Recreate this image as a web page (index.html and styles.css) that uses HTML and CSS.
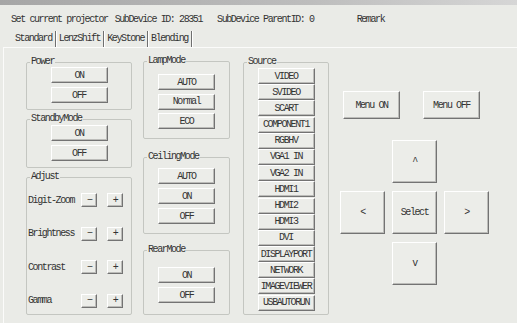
FILE: index.html
```html
<!DOCTYPE html>
<html lang="en">
<head>
  <meta charset="UTF-8">
  <title>Projector Control</title>
  <link rel="stylesheet" href="styles.css">
</head>
<body>

  <div class="topbar"></div>

  <!-- Device info -->
  <div class="info">
    <span class="info-title">Set current projector</span>
    <span class="info-id">SubDevice ID: 28351</span>
    <span class="info-parent">SubDevice ParentID: 0</span>
    <span>Remark</span>
  </div>

  <!-- Tabs -->
  <div class="tabs">
    <span class="tab active">Standard</span>
    <span class="tab">LenzShift</span>
    <span class="tab">KeyStone</span>
    <span class="tab">Blending</span>
  </div>

  <div class="panel">

    <!-- Left column -->
    <div class="col col-left">
      <fieldset class="group group-power">
        <legend>Power</legend>
        <div class="stack">
          <button class="btn">ON</button>
          <button class="btn">OFF</button>
        </div>
      </fieldset>
      <fieldset class="group group-standby">
        <legend>StandbyMode</legend>
        <div class="stack">
          <button class="btn">ON</button>
          <button class="btn">OFF</button>
        </div>
      </fieldset>
      <fieldset class="group group-adjust">
        <legend>Adjust</legend>
        <div class="adjust">
          <div class="adj-row"><span class="adj-label">Digit-Zoom</span><button class="small">&minus;</button><button class="small plus">+</button></div>
          <div class="adj-row"><span class="adj-label">Brightness</span><button class="small">&minus;</button><button class="small plus">+</button></div>
          <div class="adj-row"><span class="adj-label">Contrast</span><button class="small">&minus;</button><button class="small plus">+</button></div>
          <div class="adj-row"><span class="adj-label">Gamma</span><button class="small">&minus;</button><button class="small plus">+</button></div>
        </div>
      </fieldset>
    </div>

    <!-- Middle column -->
    <div class="col col-mid">
      <fieldset class="group group-lamp">
        <legend>LampMode</legend>
        <div class="stack stack-lamp">
          <button class="btn">AUTO</button>
          <button class="btn">Normal</button>
          <button class="btn">ECO</button>
        </div>
      </fieldset>
      <fieldset class="group group-ceiling">
        <legend>CeilingMode</legend>
        <div class="stack">
          <button class="btn">AUTO</button>
          <button class="btn">ON</button>
          <button class="btn">OFF</button>
        </div>
      </fieldset>
      <fieldset class="group group-rear">
        <legend>RearMode</legend>
        <div class="stack">
          <button class="btn">ON</button>
          <button class="btn">OFF</button>
        </div>
      </fieldset>
    </div>

    <!-- Source column -->
    <div class="col col-source">
      <fieldset class="group group-source">
        <legend>Source</legend>
        <div class="stack stack-source">
          <button class="btn">VIDEO</button>
          <button class="btn">SVIDEO</button>
          <button class="btn">SCART</button>
          <button class="btn">COMPONENT1</button>
          <button class="btn">RGBHV</button>
          <button class="btn">VGA1 IN</button>
          <button class="btn">VGA2 IN</button>
          <button class="btn">HDMI1</button>
          <button class="btn">HDMI2</button>
          <button class="btn">HDMI3</button>
          <button class="btn">DVI</button>
          <button class="btn">DISPLAYPORT</button>
          <button class="btn">NETWORK</button>
          <button class="btn">IMAGEVIEWER</button>
          <button class="btn">USBAUTORUN</button>
        </div>
      </fieldset>
    </div>

    <!-- Menu and arrows -->
    <div class="col col-pad">
      <div class="menu-row">
        <button class="menu-btn">Menu ON</button>
        <button class="menu-btn">Menu OFF</button>
      </div>
      <div class="dpad">
        <button class="pad up">^</button>
        <button class="pad left">&lt;</button>
        <button class="pad select">Select</button>
        <button class="pad right">&gt;</button>
        <button class="pad down">v</button>
      </div>
    </div>

  </div>

</body>
</html>
```

FILE: styles.css
```css
* {
  box-sizing: border-box;
}
body {
  margin: 0;
  width: 517px;
  height: 323px;
  overflow: hidden;
  background-color: #eaebe7;
  font-family: "Liberation Mono", monospace;
  font-size: 10px;
  letter-spacing: -1.4px;
  color: #333;
}
.topbar {
  height: 5px;
  background: linear-gradient(to right, #a6a6a6, #bdbdbd 60%, #d6d6d6);
}
.info {
  display: flex;
  height: 21px;
  padding: 9px 0 0 11px;
  line-height: 12px;
  white-space: pre;
}
.info-title {
  margin-right: 7px;
}
.info-id {
  margin-right: 15px;
}
.info-parent {
  margin-right: 43px;
}
.tabs {
  display: flex;
  height: 16px;
  margin-top: 5px;
  padding-left: 12px;
  line-height: 15px;
}
.tab {
  padding: 0 3px;
  border-right: 1px solid #6f6f6f;
  box-shadow: 1px 0 0 #fff;
  white-space: pre;
}
.panel {
  display: flex;
  align-items: flex-start;
  height: 276px;
  margin-left: 3px;
  padding-left: 22px;
  border-top: 1px solid #fbfbfa;
  border-left: 1px solid #fbfbfa;
}
.col {
  display: flex;
  flex-direction: column;
}
.col-left {
  width: 106px;
  margin-top: 9px;
  gap: 4px;
}
.col-mid {
  width: 87px;
  margin-left: 11px;
  margin-top: 8px;
}
.col-source {
  width: 86px;
  margin-left: 13px;
  margin-top: 9px;
}
.col-pad {
  margin-left: 11px;
  margin-top: 43px;
}

/* group boxes */
.group {
  margin: 0;
  padding: 0;
  min-width: 0;
  border: 1px solid #c4c6c1;
  border-radius: 2px;
}
.group legend {
  margin-left: 3px;
  padding: 0 1px;
  height: 10px;
  line-height: 10px;
}
.stack {
  display: flex;
  flex-direction: column;
  align-items: center;
  gap: 4px;
}
.group-power {
  padding-bottom: 6px;
}
.group-standby {
  padding: 1px 0 6px;
}
.group-adjust {
  padding: 11px 0 6px;
}
.group-lamp {
  padding: 8px 0 9px;
}
.stack-lamp {
  gap: 3.5px;
}
.group-ceiling {
  margin-top: 13px;
  padding: 6px 0 9px;
}
.group-rear {
  margin-top: 11px;
  padding: 12px 0 11px;
}
.group-source {
  padding: 1px 0 3px;
}
.stack-source {
  gap: 0.2px;
}

/* buttons */
button {
  margin: 0;
  padding: 0;
  font: inherit;
  letter-spacing: inherit;
  color: inherit;
  background-color: #ecede9;
  border: 1px solid;
  border-color: #fff #737373 #737373 #fff;
  box-shadow: inset -1px -1px 0 #bcbcb9;
  white-space: pre;
}
.btn {
  width: 57px;
  height: 16px;
}
.adjust {
  display: flex;
  flex-direction: column;
  gap: 19.5px;
  padding-left: 1px;
}
.adj-row {
  display: flex;
  align-items: center;
  height: 14px;
}
.adj-label {
  width: 53px;
}
.small {
  width: 16px;
  height: 14px;
}
.plus {
  margin-left: 10px;
}
.menu-row {
  display: flex;
  gap: 23px;
  padding-left: 3px;
}
.menu-btn {
  width: 57px;
  height: 28px;
}
.dpad {
  display: grid;
  grid-template-columns: repeat(3, 45px);
  grid-template-rows: repeat(3, 43px);
  gap: 8px 7px;
  margin-top: 21px;
}
.pad {
  width: 45px;
  height: 43px;
}
.up {
  grid-column: 2;
  grid-row: 1;
}
.left {
  grid-column: 1;
  grid-row: 2;
}
.select {
  grid-column: 2;
  grid-row: 2;
}
.right {
  grid-column: 3;
  grid-row: 2;
}
.down {
  grid-column: 2;
  grid-row: 3;
}
```
